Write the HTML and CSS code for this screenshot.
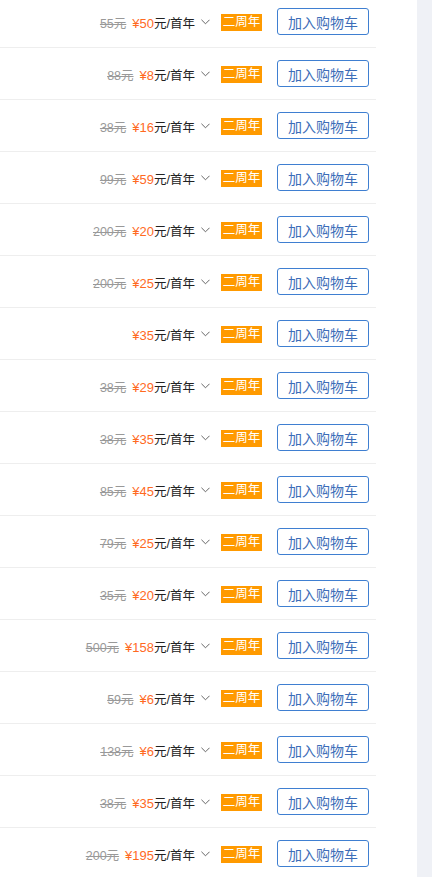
FILE: index.html
```html
<!DOCTYPE html>
<html lang="zh">
<head>
<meta charset="utf-8">
<link rel="stylesheet" href="styles.css">
</head>
<body>
<div class="page">
  <div class="list">
    <div class="row"><div class="price"><s class="old">55元</s><span class="now">¥50</span><span class="unit">元/首年</span></div><svg class="chev" viewBox="0 0 10 6"><path d="M0.5 0.5 L5 5 L9.5 0.5"/></svg><span class="badge">二周年</span><button class="btn">加入购物车</button></div>
    <div class="row"><div class="price"><s class="old">88元</s><span class="now">¥8</span><span class="unit">元/首年</span></div><svg class="chev" viewBox="0 0 10 6"><path d="M0.5 0.5 L5 5 L9.5 0.5"/></svg><span class="badge">二周年</span><button class="btn">加入购物车</button></div>
    <div class="row"><div class="price"><s class="old">38元</s><span class="now">¥16</span><span class="unit">元/首年</span></div><svg class="chev" viewBox="0 0 10 6"><path d="M0.5 0.5 L5 5 L9.5 0.5"/></svg><span class="badge">二周年</span><button class="btn">加入购物车</button></div>
    <div class="row"><div class="price"><s class="old">99元</s><span class="now">¥59</span><span class="unit">元/首年</span></div><svg class="chev" viewBox="0 0 10 6"><path d="M0.5 0.5 L5 5 L9.5 0.5"/></svg><span class="badge">二周年</span><button class="btn">加入购物车</button></div>
    <div class="row"><div class="price"><s class="old">200元</s><span class="now">¥20</span><span class="unit">元/首年</span></div><svg class="chev" viewBox="0 0 10 6"><path d="M0.5 0.5 L5 5 L9.5 0.5"/></svg><span class="badge">二周年</span><button class="btn">加入购物车</button></div>
    <div class="row"><div class="price"><s class="old">200元</s><span class="now">¥25</span><span class="unit">元/首年</span></div><svg class="chev" viewBox="0 0 10 6"><path d="M0.5 0.5 L5 5 L9.5 0.5"/></svg><span class="badge">二周年</span><button class="btn">加入购物车</button></div>
    <div class="row"><div class="price"><span class="now">¥35</span><span class="unit">元/首年</span></div><svg class="chev" viewBox="0 0 10 6"><path d="M0.5 0.5 L5 5 L9.5 0.5"/></svg><span class="badge">二周年</span><button class="btn">加入购物车</button></div>
    <div class="row"><div class="price"><s class="old">38元</s><span class="now">¥29</span><span class="unit">元/首年</span></div><svg class="chev" viewBox="0 0 10 6"><path d="M0.5 0.5 L5 5 L9.5 0.5"/></svg><span class="badge">二周年</span><button class="btn">加入购物车</button></div>
    <div class="row"><div class="price"><s class="old">38元</s><span class="now">¥35</span><span class="unit">元/首年</span></div><svg class="chev" viewBox="0 0 10 6"><path d="M0.5 0.5 L5 5 L9.5 0.5"/></svg><span class="badge">二周年</span><button class="btn">加入购物车</button></div>
    <div class="row"><div class="price"><s class="old">85元</s><span class="now">¥45</span><span class="unit">元/首年</span></div><svg class="chev" viewBox="0 0 10 6"><path d="M0.5 0.5 L5 5 L9.5 0.5"/></svg><span class="badge">二周年</span><button class="btn">加入购物车</button></div>
    <div class="row"><div class="price"><s class="old">79元</s><span class="now">¥25</span><span class="unit">元/首年</span></div><svg class="chev" viewBox="0 0 10 6"><path d="M0.5 0.5 L5 5 L9.5 0.5"/></svg><span class="badge">二周年</span><button class="btn">加入购物车</button></div>
    <div class="row"><div class="price"><s class="old">35元</s><span class="now">¥20</span><span class="unit">元/首年</span></div><svg class="chev" viewBox="0 0 10 6"><path d="M0.5 0.5 L5 5 L9.5 0.5"/></svg><span class="badge">二周年</span><button class="btn">加入购物车</button></div>
    <div class="row"><div class="price"><s class="old">500元</s><span class="now">¥158</span><span class="unit">元/首年</span></div><svg class="chev" viewBox="0 0 10 6"><path d="M0.5 0.5 L5 5 L9.5 0.5"/></svg><span class="badge">二周年</span><button class="btn">加入购物车</button></div>
    <div class="row"><div class="price"><s class="old">59元</s><span class="now">¥6</span><span class="unit">元/首年</span></div><svg class="chev" viewBox="0 0 10 6"><path d="M0.5 0.5 L5 5 L9.5 0.5"/></svg><span class="badge">二周年</span><button class="btn">加入购物车</button></div>
    <div class="row"><div class="price"><s class="old">138元</s><span class="now">¥6</span><span class="unit">元/首年</span></div><svg class="chev" viewBox="0 0 10 6"><path d="M0.5 0.5 L5 5 L9.5 0.5"/></svg><span class="badge">二周年</span><button class="btn">加入购物车</button></div>
    <div class="row"><div class="price"><s class="old">38元</s><span class="now">¥35</span><span class="unit">元/首年</span></div><svg class="chev" viewBox="0 0 10 6"><path d="M0.5 0.5 L5 5 L9.5 0.5"/></svg><span class="badge">二周年</span><button class="btn">加入购物车</button></div>
    <div class="row"><div class="price"><s class="old">200元</s><span class="now">¥195</span><span class="unit">元/首年</span></div><svg class="chev" viewBox="0 0 10 6"><path d="M0.5 0.5 L5 5 L9.5 0.5"/></svg><span class="badge">二周年</span><button class="btn">加入购物车</button></div>
  </div>
  <div class="side"></div>
</div>
</body>
</html>
```
FILE: styles.css
```css
html, body {
  margin: 0;
  padding: 0;
  background: #fff;
  overflow: hidden;
}
body {
  font-family: "Liberation Sans", "Noto Sans CJK SC", sans-serif;
  font-size: 13px;
  color: #222;
}
.page {
  display: flex;
  height: 877px;
  overflow: hidden;
}
.list {
  width: 376px;
  margin-top: -4px;
  margin-right: 41px;
  flex: none;
}
.side {
  flex: 1;
  background: #eff1f6;
}
.row {
  height: 51px;
  border-bottom: 1px solid #eeeeee;
  display: flex;
  align-items: center;
  justify-content: flex-end;
  padding-right: 7px;
  box-sizing: content-box;
}
.price {
  display: flex;
  align-items: baseline;
  white-space: nowrap;
  font-size: 13px;
  margin-top: 1px;
}
.old {
  color: #999;
  margin-right: 6px;
  font-size: 12.5px;
}
.now {
  color: #ff6a1f;
}
.unit {
  color: #222;
  font-size: 12.5px;
}
.chev {
  width: 9px;
  height: 6px;
  margin-left: 6px;
  margin-right: 11px;
  fill: none;
  stroke: #555;
  stroke-width: 1;
}
.badge {
  background: #ff9a00;
  color: #fff;
  font-size: 12.5px;
  line-height: 17px;
  height: 17px;
  width: 41px;
  text-align: center;
  margin-right: 15px;
  margin-top: 1px;
  white-space: nowrap;
}
.btn {
  width: 92px;
  height: 27px;
  border: 1px solid #3f7fd1;
  border-radius: 3px;
  background: #fff;
  color: #3c6db8;
  font-family: "Liberation Sans", "Noto Sans CJK SC", sans-serif;
  font-size: 14px;
  padding: 0;
  margin: 0;
  box-sizing: border-box;
}
```
